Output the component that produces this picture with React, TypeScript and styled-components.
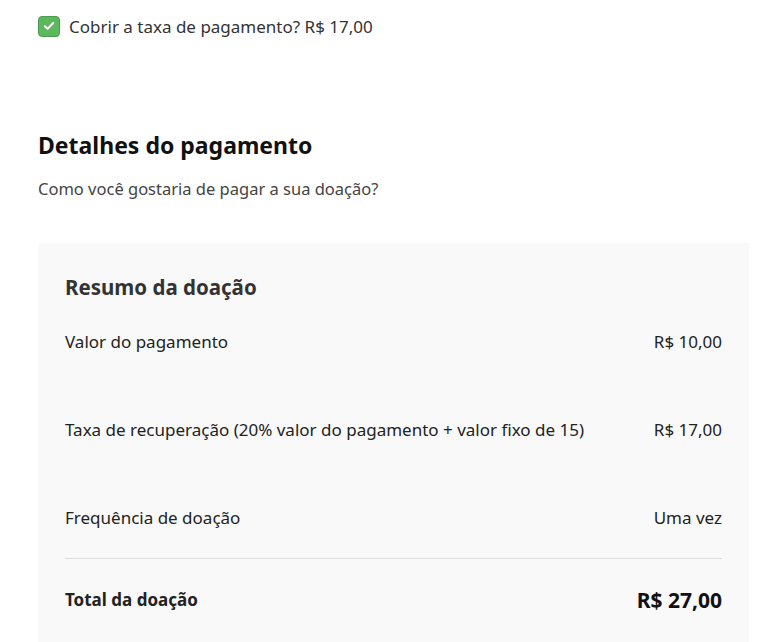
import { FC } from 'react';
import styled, { createGlobalStyle } from 'styled-components';

const GlobalStyle = createGlobalStyle`
  body {
    margin: 0;
    background: #ffffff;
    font-family: "Noto Sans", "Open Sans", sans-serif;
    color: #333333;
  }
`;

const Page = styled.div`
  padding: 15px 33px 0 38px;
  display: flex;
  flex-direction: column;
`;

const FeeOption = styled.label`
  display: flex;
  align-items: center;
  gap: 9px;
  font-size: 17px;
  color: #333;
  height: 22px;
`;

const CheckBox = styled.span`
  width: 20px;
  height: 19px;
  border-radius: 4px;
  background: #5cb85c;
  border: 1px solid #4c9a4c;
  display: flex;
  align-items: center;
  justify-content: center;
  flex-shrink: 0;
`;

const Title = styled.h2`
  margin: 93px 0 0;
  font-size: 23px;
  font-weight: 700;
  color: #111;
  line-height: 30px;
`;

const Subtitle = styled.p`
  margin: 18px 0 0;
  font-size: 16.5px;
  color: #444;
  line-height: 22px;
`;

const Summary = styled.section`
  margin-top: 43px;
  background: #f9f9f9;
  padding: 30px 27px 28px;
  display: flex;
  flex-direction: column;
`;

const SummaryTitle = styled.h3`
  margin: 0 0 29px;
  font-size: 20.5px;
  font-weight: 700;
  color: #333;
  line-height: 28px;
`;

const Rows = styled.div`
  display: flex;
  flex-direction: column;
  gap: 64px;
`;

const Row = styled.div<{ $total?: boolean }>`
  display: flex;
  justify-content: space-between;
  align-items: center;
  line-height: ${p => (p.$total ? '28px' : '24px')};
  font-size: 17px;
  color: #222;
  font-weight: ${p => (p.$total ? 700 : 400)};
  ${p =>
    p.$total &&
    `
    margin-top: 28px;
    padding-top: 27px;
    border-top: 1px solid #dddddd;
  `}
`;

const Amount = styled.span<{ $big?: boolean }>`
  font-size: ${p => (p.$big ? '21px' : '17px')};
  font-weight: ${p => (p.$big ? 700 : 'inherit')};
  color: ${p => (p.$big ? '#111' : 'inherit')};
`;

const Check: FC = () => (
  <svg width="12" height="10" viewBox="0 0 12 10">
    <path d="M1.8 5.2 L4.6 7.8 L10.2 2" fill="none" stroke="#fff" strokeWidth="2" strokeLinecap="round" strokeLinejoin="round" />
  </svg>
);

const App: FC = () => (
  <>
    <GlobalStyle />
    <Page>
      <FeeOption>
        <CheckBox><Check /></CheckBox>
        Cobrir a taxa de pagamento? R$ 17,00
      </FeeOption>

      <Title>Detalhes do pagamento</Title>
      <Subtitle>Como você gostaria de pagar a sua doação?</Subtitle>

      <Summary>
        <SummaryTitle>Resumo da doação</SummaryTitle>
        <Rows>
          <Row>
            <span>Valor do pagamento</span>
            <Amount>R$ 10,00</Amount>
          </Row>
          <Row>
            <span>Taxa de recuperação (20% valor do pagamento + valor fixo de 15)</span>
            <Amount>R$ 17,00</Amount>
          </Row>
          <Row>
            <span>Frequência de doação</span>
            <Amount>Uma vez</Amount>
          </Row>
        </Rows>
        <Row $total>
          <span>Total da doação</span>
          <Amount $big>R$ 27,00</Amount>
        </Row>
      </Summary>
    </Page>
  </>
);

export default App;
